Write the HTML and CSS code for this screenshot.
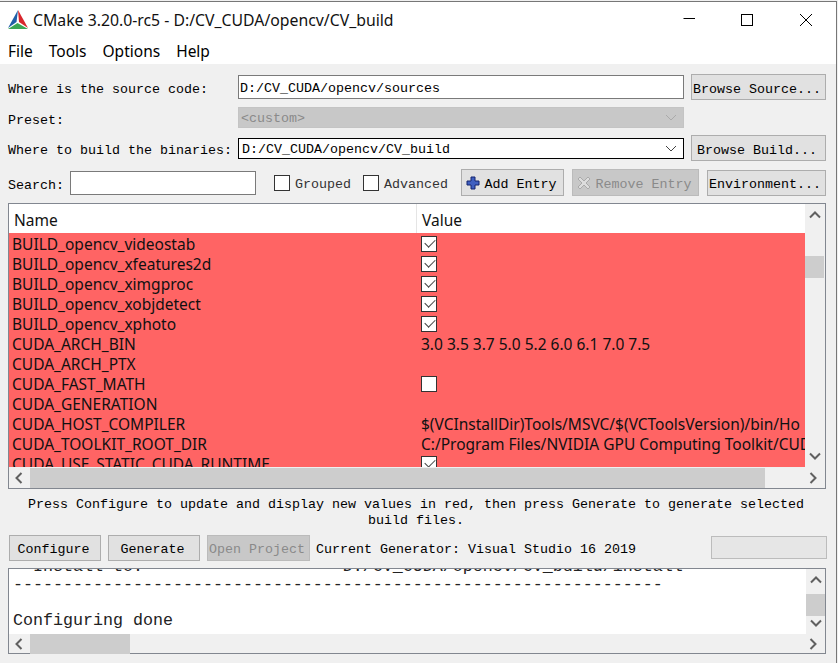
FILE: index.html
```html
<!DOCTYPE html>
<html lang="en">
<head>
<meta charset="utf-8">
<title>CMake</title>
<link rel="stylesheet" href="styles.css">
</head>
<body>
<div class="window">
  <header class="head">
    <div class="titlebar">
      <svg class="logo" width="22" height="22" viewBox="0 0 22 22">
        <polygon points="11,1 1,19 9.5,13" fill="#1f5fa8"/>
        <polygon points="11,1 21,19 12,13" fill="#d8262c"/>
        <polygon points="1,20 21,20 10.5,14" fill="#3aa655"/>
      </svg>
      <span class="title">CMake 3.20.0-rc5 - D:/CV_CUDA/opencv/CV_build</span>
      <div class="caption">
        <svg width="14" height="14" viewBox="0 0 14 14"><path d="M2.5 5.5H14" stroke="#000" fill="none"/></svg>
        <svg width="14" height="14" viewBox="0 0 14 14"><rect x="1.5" y="1.5" width="11" height="11" stroke="#000" fill="none"/></svg>
        <svg width="14" height="14" viewBox="0 0 14 14"><path d="M1 1L13 13M13 1L1 13" stroke="#000" fill="none"/></svg>
      </div>
    </div>
    <nav class="menu"><span>File</span><span>Tools</span><span>Options</span><span>Help</span></nav>
  </header>
  <main class="body mono">
    <div class="paths">
      <label>Where is the source code:</label>
      <div class="field">D:/CV_CUDA/opencv/sources</div>
      <button class="btn wide">Browse Source...</button>
      <label>Preset:</label>
      <div class="field combo off">&lt;custom&gt;<svg class="chev" width="12" height="7" viewBox="0 0 12 7"><path d="M1 1L6 6L11 1" stroke="#aaa" fill="none"/></svg></div>
      <span></span>
      <label>Where to build the binaries:</label>
      <div class="field combo dark">D:/CV_CUDA/opencv/CV_build<svg class="chev" width="12" height="7" viewBox="0 0 12 7"><path d="M1 1L6 6L11 1" stroke="#444" fill="none"/></svg></div>
      <button class="btn wide">Browse Build...</button>
    </div>
    <div class="search">
      <label class="slabel">Search:</label>
      <div class="sinput"></div>
      <span class="check"><i class="cb"></i>Grouped</span>
      <span class="check"><i class="cb"></i>Advanced</span>
      <button class="btn add"><svg class="bicon" width="14" height="14" viewBox="0 0 14 14"><path d="M5 1H9V5H13V9H9V13H5V9H1V5H5Z" fill="#3f5fc0" stroke="#14246e"/></svg>Add Entry</button>
      <button class="btn remove" disabled><svg class="bicon" width="14" height="14" viewBox="0 0 14 14"><path d="M1 3L3 1L7 5L11 1L13 3L9 7L13 11L11 13L7 9L3 13L1 11L5 7Z" fill="#ddd" stroke="#aaa"/></svg>Remove Entry</button>
      <button class="btn env">Environment...</button>
    </div>
    <section class="table sans">
      <div class="tmain">
        <div class="thead"><div class="tname">Name</div><div class="tval">Value</div></div>
        <div class="rows">
          <div class="row"><span class="n">BUILD_opencv_videostab</span><span class="v"><i class="box on"></i></span></div>
          <div class="row"><span class="n">BUILD_opencv_xfeatures2d</span><span class="v"><i class="box on"></i></span></div>
          <div class="row"><span class="n">BUILD_opencv_ximgproc</span><span class="v"><i class="box on"></i></span></div>
          <div class="row"><span class="n">BUILD_opencv_xobjdetect</span><span class="v"><i class="box on"></i></span></div>
          <div class="row"><span class="n">BUILD_opencv_xphoto</span><span class="v"><i class="box on"></i></span></div>
          <div class="row"><span class="n">CUDA_ARCH_BIN</span><span class="v">3.0 3.5 3.7 5.0 5.2 6.0 6.1 7.0 7.5</span></div>
          <div class="row"><span class="n">CUDA_ARCH_PTX</span><span class="v"></span></div>
          <div class="row"><span class="n">CUDA_FAST_MATH</span><span class="v"><i class="box"></i></span></div>
          <div class="row"><span class="n">CUDA_GENERATION</span><span class="v"></span></div>
          <div class="row"><span class="n">CUDA_HOST_COMPILER</span><span class="v">$(VCInstallDir)Tools/MSVC/$(VCToolsVersion)/bin/Ho</span></div>
          <div class="row"><span class="n">CUDA_TOOLKIT_ROOT_DIR</span><span class="v">C:/Program Files/NVIDIA GPU Computing Toolkit/CUD</span></div>
          <div class="row"><span class="n">CUDA_USE_STATIC_CUDA_RUNTIME</span><span class="v"><i class="box on"></i></span></div>
        </div>
      </div>
      <div class="vbar">
        <svg class="arrow" width="12" height="8" viewBox="0 0 12 8"><path d="M1 6.5L6 1.5L11 6.5" stroke="#606060" stroke-width="2" fill="none"/></svg>
        <div class="vtrack"><div class="thumb t1"></div></div>
        <svg class="arrow" width="12" height="8" viewBox="0 0 12 8"><path d="M1 1.5L6 6.5L11 1.5" stroke="#606060" stroke-width="2" fill="none"/></svg>
      </div>
      <div class="hbar">
        <svg class="arrow" width="8" height="12" viewBox="0 0 8 12"><path d="M6.5 1L1.5 6L6.5 11" stroke="#606060" stroke-width="2" fill="none"/></svg>
        <div class="htrack"><div class="hthumb h1"></div></div>
        <svg class="arrow" width="8" height="12" viewBox="0 0 8 12"><path d="M1.5 1L6.5 6L1.5 11" stroke="#606060" stroke-width="2" fill="none"/></svg>
      </div>
    </section>
    <p class="note">Press Configure to update and display new values in red, then press Generate to generate selected build files.</p>
    <div class="actions">
      <button class="btn act">Configure</button>
      <button class="btn act">Generate</button>
      <button class="btn open" disabled>Open Project</button>
      <span class="gen">Current Generator: Visual Studio 16 2019</span>
      <div class="progress"></div>
    </div>
    <section class="log">
      <div class="logmain">
<pre class="logtext">  Install to:                    D:/CV_CUDA/opencv/CV_build/install
-----------------------------------------------------------------

Configuring done</pre>
      </div>
      <div class="vbar">
        <svg class="arrow" width="12" height="8" viewBox="0 0 12 8"><path d="M1 6.5L6 1.5L11 6.5" stroke="#606060" stroke-width="2" fill="none"/></svg>
        <div class="vtrack"><div class="thumb t2"></div></div>
        <svg class="arrow" width="12" height="8" viewBox="0 0 12 8"><path d="M1 1.5L6 6.5L11 1.5" stroke="#606060" stroke-width="2" fill="none"/></svg>
      </div>
      <div class="hbar">
        <svg class="arrow" width="8" height="12" viewBox="0 0 8 12"><path d="M6.5 1L1.5 6L6.5 11" stroke="#606060" stroke-width="2" fill="none"/></svg>
        <div class="htrack"><div class="hthumb h2"></div></div>
        <svg class="arrow" width="8" height="12" viewBox="0 0 8 12"><path d="M1.5 1L6.5 6L1.5 11" stroke="#606060" stroke-width="2" fill="none"/></svg>
      </div>
    </section>
  </main>
</div>
</body>
</html>
```
FILE: styles.css
```css
* { box-sizing: border-box; }
html, body { margin: 0; padding: 0; }
body { width: 838px; height: 663px; overflow: hidden; background: #f0f0f0; }
.window { width: 837px; height: 663px; margin-top: 1px; border-top: 1px solid #777; border-right: 1px solid #777; display: flex; flex-direction: column; background: #f0f0f0; }
.head { height: 62px; background: #fff; font-family: "Noto Sans", sans-serif; color: #000; }
.titlebar { height: 36px; display: flex; align-items: center; padding-left: 7px; }
.logo { margin-right: 4px; }
.title { font-size: 15.8px; color: #111; }
.caption { margin-left: auto; display: flex; gap: 45px; padding-right: 23px; }
.menu { display: flex; gap: 16px; padding-left: 8px; font-size: 15.5px; line-height: 26px; }
.body { flex: 1; padding: 10px 10px 0 8px; }
.mono { font-family: "Liberation Mono", monospace; font-size: 13.33px; color: #000; }
.sans { font-family: "Noto Sans", sans-serif; font-size: 15.5px; }
.paths { display: grid; grid-template-columns: 230px 446px 135px; column-gap: 0; grid-template-rows: 26px 21px 26px; row-gap: 7px; align-items: center; }
.paths label { white-space: nowrap; padding-top: 5px; }
.paths .btn { margin-left: 7px; width: 135px; padding-top: 4px; }
.field { height: 24px; border: 1px solid #7a7a7a; background: #fff; padding: 3px 0 0 1px; line-height: 18px; display: flex; align-items: center; position: relative; }
.combo { height: 21px; padding-top: 3px; }
.off { background: #c8c8c8; border-color: #c4c4c4; color: #8a8a8a; padding-left: 2px; }
.dark { border-color: #000; padding-left: 3px; }
.chev { margin-left: auto; margin-right: 6px; margin-top: -3px; }
.btn { font: inherit; color: #000; height: 26px; padding: 2px 3px 0 0; background: #e1e1e1; border: 1px solid #adadad; white-space: nowrap; display: inline-flex; align-items: center; justify-content: center; gap: 3px; }
.bicon { margin: -3px 2px 0 0; }
.add, .remove, .env { padding-top: 4px; }
.add .bicon, .remove .bicon { margin-top: -4px; }
.btn:disabled { background: #c8c8c8; border-color: #bbb; color: #8a8a8a; }
.search { display: flex; align-items: center; height: 27px; margin-top: 8px; }
.slabel { width: 62px; padding-top: 5px; }
.sinput { width: 186px; height: 24px; border: 1px solid #7a7a7a; background: #fff; }
.check { display: inline-flex; align-items: center; gap: 5px; color: #333; line-height: 16px; padding-top: 5px; }
.check:nth-of-type(1) { margin-left: 18px; width: 89px; }
.check:nth-of-type(2) { width: 98px; }
.cb { width: 16px; height: 16px; border: 1px solid #333; background: #fff; display: block; margin-top: -5px; }
.add { width: 103px; height: 27px; }
.remove { width: 127px; height: 27px; margin-left: 8px; }
.env { width: 119px; height: 26px; margin-left: 8px; }
.table { width: 818px; height: 286px; margin-top: 7px; border: 1px solid #828790; background: #f0f0f0; display: grid; grid-template-columns: 796px 20px; grid-template-rows: 263px 21px; }
.tmain { overflow: hidden; background: #fff; }
.thead { height: 29px; display: flex; align-items: center; background: #fff; color: #111; }
.tname { width: 408px; height: 100%; padding: 2px 0 0 5px; border-right: 1px solid #e5e5e5; line-height: 29px; }
.tval { padding: 3px 0 0 5px; }
.rows { height: 234px; overflow: hidden; background: #ff6464; }
.row { height: 20px; display: flex; align-items: center; white-space: nowrap; color: #111; padding-top: 1px; }
.n { width: 408px; padding-left: 3px; flex: none; }
.v { padding-left: 4px; display: flex; align-items: center; }
.box { width: 16px; height: 16px; border: 1px solid #333; background: #fff; display: block; position: relative; }
.on::after { content: ""; position: absolute; left: 3px; top: 2px; width: 9px; height: 5px; border-left: 1.5px solid #444; border-bottom: 1.5px solid #444; transform: rotate(-45deg); }
.vbar { display: flex; flex-direction: column; align-items: center; background: #f0f0f0; padding: 7px 0; width: 19px; }
.vtrack { flex: 1; width: 100%; position: relative; margin: 3px 0; }
.thumb { background: #cdcdcd; width: 19px; height: 22px; }
.t1 { margin-top: 34px; }
.t2 { margin-top: 7px; }
.hbar { grid-column: 1 / 3; display: flex; align-items: center; padding: 0 8px 0 6px; background: #f0f0f0; margin-top: 1px; }
.htrack { flex: 1; height: 20px; margin: 0 6px 0 7px; }
.hthumb { height: 100%; background: #cdcdcd; }
.h1 { width: 735px; }
.h2 { width: 100px; }
.note { margin: 6px 20px 0 0; padding-top: 2px; height: 32px; line-height: 16px; text-align: center; width: 816px; }
.actions { display: flex; align-items: center; height: 26px; margin: 8px -1px 0 0; padding-left: 1px; }
.act { width: 92px; margin-right: 7px; }
.open { width: 103px; }
.gen { margin-left: 6px; padding-top: 2px; }
.progress { margin: -1px 0 0 auto; width: 116px; height: 23px; background: #e6e6e6; border: 1px solid #bcbcbc; }
.log { width: 818px; height: 86px; margin-top: 7px; border: 1px solid #828790; background: #f0f0f0; display: grid; grid-template-columns: 797px 19px; grid-template-rows: 65px 19px; }
.logmain { background: #fff; overflow: hidden; position: relative; }
.logtext { margin: -11px 0 0 4px; font-family: "Liberation Mono", monospace; font-size: 16.67px; line-height: 18px; color: #222; }
```
